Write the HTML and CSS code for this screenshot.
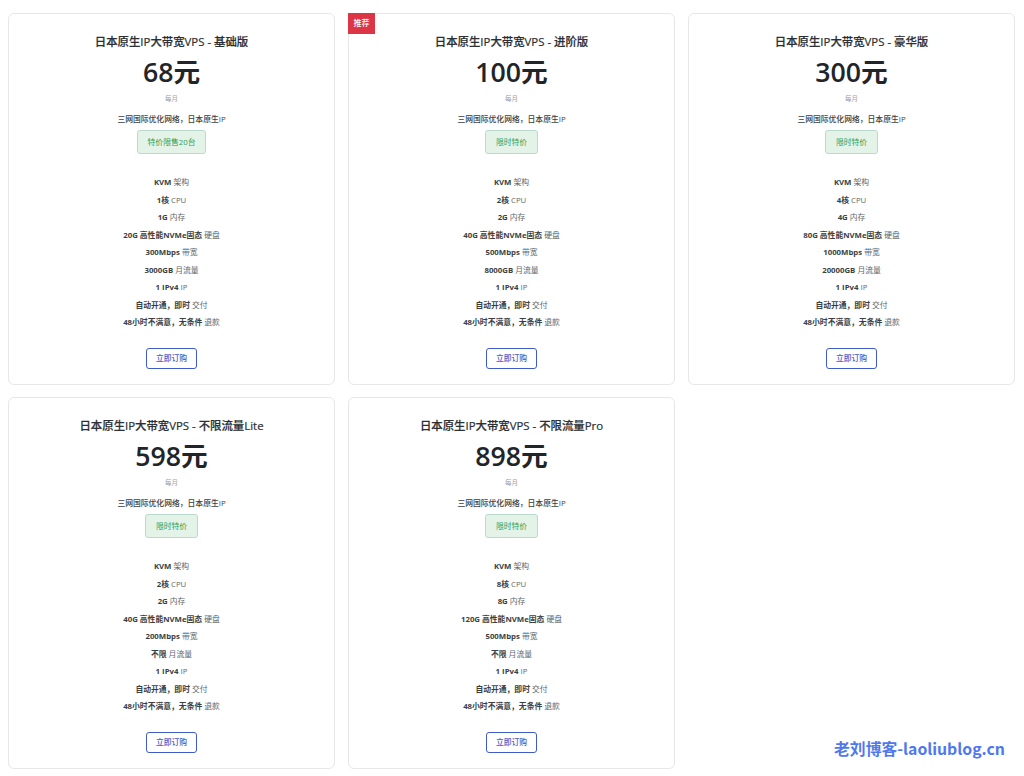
FILE: index.html
```html
<!DOCTYPE html>
<html lang="zh-CN">
<head>
<meta charset="utf-8">
<title>日本原生IP大带宽VPS</title>
<link rel="stylesheet" href="styles.css">
</head>
<body>
<main class="grid">
  <section class="card">
    <h2 class="title">日本原生IP大带宽VPS - 基础版</h2>
    <div class="price">68元</div>
    <div class="period">每月</div>
    <p class="desc">三网国际优化网络，日本原生IP</p>
    <div class="badge">特价限售20台</div>
    <ul class="features">
      <li><b>KVM</b> 架构</li><li><b>1核</b> CPU</li><li><b>1G</b> 内存</li>
      <li><b>20G 高性能NVMe固态</b> 硬盘</li><li><b>300Mbps</b> 带宽</li><li><b>3000GB</b> 月流量</li>
      <li><b>1 IPv4</b> IP</li><li><b>自动开通，即时</b> 交付</li><li><b>48小时不满意，无条件</b> 退款</li>
    </ul>
    <a class="btn">立即订购</a>
  </section>
  <section class="card">
    <span class="ribbon">推荐</span>
    <h2 class="title">日本原生IP大带宽VPS - 进阶版</h2>
    <div class="price">100元</div>
    <div class="period">每月</div>
    <p class="desc">三网国际优化网络，日本原生IP</p>
    <div class="badge">限时特价</div>
    <ul class="features">
      <li><b>KVM</b> 架构</li><li><b>2核</b> CPU</li><li><b>2G</b> 内存</li>
      <li><b>40G 高性能NVMe固态</b> 硬盘</li><li><b>500Mbps</b> 带宽</li><li><b>8000GB</b> 月流量</li>
      <li><b>1 IPv4</b> IP</li><li><b>自动开通，即时</b> 交付</li><li><b>48小时不满意，无条件</b> 退款</li>
    </ul>
    <a class="btn">立即订购</a>
  </section>
  <section class="card">
    <h2 class="title">日本原生IP大带宽VPS - 豪华版</h2>
    <div class="price">300元</div>
    <div class="period">每月</div>
    <p class="desc">三网国际优化网络，日本原生IP</p>
    <div class="badge">限时特价</div>
    <ul class="features">
      <li><b>KVM</b> 架构</li><li><b>4核</b> CPU</li><li><b>4G</b> 内存</li>
      <li><b>80G 高性能NVMe固态</b> 硬盘</li><li><b>1000Mbps</b> 带宽</li><li><b>20000GB</b> 月流量</li>
      <li><b>1 IPv4</b> IP</li><li><b>自动开通，即时</b> 交付</li><li><b>48小时不满意，无条件</b> 退款</li>
    </ul>
    <a class="btn">立即订购</a>
  </section>
  <section class="card">
    <h2 class="title">日本原生IP大带宽VPS - 不限流量Lite</h2>
    <div class="price">598元</div>
    <div class="period">每月</div>
    <p class="desc">三网国际优化网络，日本原生IP</p>
    <div class="badge">限时特价</div>
    <ul class="features">
      <li><b>KVM</b> 架构</li><li><b>2核</b> CPU</li><li><b>2G</b> 内存</li>
      <li><b>40G 高性能NVMe固态</b> 硬盘</li><li><b>200Mbps</b> 带宽</li><li><b>不限</b> 月流量</li>
      <li><b>1 IPv4</b> IP</li><li><b>自动开通，即时</b> 交付</li><li><b>48小时不满意，无条件</b> 退款</li>
    </ul>
    <a class="btn">立即订购</a>
  </section>
  <section class="card">
    <h2 class="title">日本原生IP大带宽VPS - 不限流量Pro</h2>
    <div class="price">898元</div>
    <div class="period">每月</div>
    <p class="desc">三网国际优化网络，日本原生IP</p>
    <div class="badge">限时特价</div>
    <ul class="features">
      <li><b>KVM</b> 架构</li><li><b>8核</b> CPU</li><li><b>8G</b> 内存</li>
      <li><b>120G 高性能NVMe固态</b> 硬盘</li><li><b>500Mbps</b> 带宽</li><li><b>不限</b> 月流量</li>
      <li><b>1 IPv4</b> IP</li><li><b>自动开通，即时</b> 交付</li><li><b>48小时不满意，无条件</b> 退款</li>
    </ul>
    <a class="btn">立即订购</a>
  </section>
</main>
<div class="watermark">老刘博客-laoliublog.cn</div>
</body>
</html>
```

FILE: styles.css
```css
* { box-sizing: border-box; }
html, body { margin: 0; height: 776px; overflow: hidden; background: #fff; }
body {
  font-family: "Open Sans", "Noto Sans CJK SC", sans-serif;
  color: #212529;
  position: relative;
}
.grid {
  display: grid;
  grid-template-columns: repeat(3, 327px);
  grid-auto-rows: 372px;
  column-gap: 13px;
  row-gap: 12px;
  padding: 13px 0 0 8px;
}
.card {
  position: relative;
  border: 1px solid #e6e7e9;
  border-radius: 6px;
  padding: 18px 16px 0;
  display: flex;
  flex-direction: column;
  align-items: center;
  text-align: center;
}
.ribbon {
  position: absolute;
  top: -1px;
  left: -1px;
  width: 27px;
  height: 21px;
  background: #dc3545;
  color: #fff;
  font-size: 8px;
  line-height: 20px;
  font-weight: 500;
}
.title {
  margin: 0;
  font-size: 11.4px;
  line-height: 19px;
  font-weight: 500;
  color: #2b2f33;
  -webkit-text-stroke: 0.2px #2b2f33;
}
.price { margin-top: 1px; font-size: 26.7px; line-height: 40px; font-weight: 600; }
.period { margin-top: 2px; font-size: 6.5px; line-height: 10px; color: #9aa0a6; }
.desc { margin: 9px 0 0; font-size: 7.8px; line-height: 12px; font-weight: 500; color: #3a3f44; }
.badge {
  margin-top: 5px;
  padding: 0 10px;
  height: 24px;
  border: 1px solid #badbcc;
  border-radius: 3px;
  background: #e4f3e8;
  color: #2f9e58;
  font-size: 7.8px;
  line-height: 22px;
}
.features { list-style: none; margin: 20px 0 0; padding: 0; font-size: 7.8px; line-height: 17.5px; color: #60666c; }
.features b { font-weight: 700; color: #3a3f44; }
.btn {
  margin-top: 16px;
  width: 51px;
  height: 21px;
  border: 1px solid #3f5bc9;
  border-radius: 3px;
  color: #3f5bc9;
  font-size: 7.8px;
  font-weight: 500;
  line-height: 19px;
}
.watermark {
  position: absolute;
  right: 19px;
  top: 738px;
  font-family: "Noto Sans CJK SC", sans-serif;
  font-size: 15.8px;
  line-height: 21px;
  font-weight: 700;
  color: #4f78ee;
}
```
